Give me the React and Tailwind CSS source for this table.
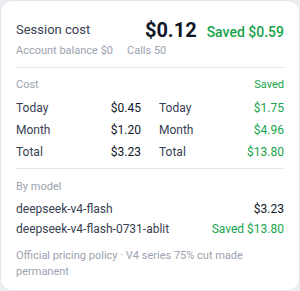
const rows = [
  { label: "Today", cost: "$0.45", saved: "$1.75" },
  { label: "Month", cost: "$1.20", saved: "$4.96" },
  { label: "Total", cost: "$3.23", saved: "$13.80" },
];

export default function App() {
  return (
    <div className="w-[300px] h-[291px] bg-[#eceef1] font-['Roboto',sans-serif]">
      <div className="h-full w-full rounded-[12px] border border-[#e4e6ea] bg-white px-[15px] pt-[16px]">
        <div className="flex h-[26px] items-center justify-between">
          <span className="text-[13px] text-[#374151]">Session cost</span>
          <div className="flex items-baseline gap-[10px]">
            <span className="text-[20px] font-bold text-[#111827]">$0.12</span>
            <span className="text-[14px] font-medium text-[#16a34a]">Saved $0.59</span>
          </div>
        </div>
        <div className="flex h-[16px] items-center gap-[14px] text-[11px] text-[#9ca3af]">
          <span>Account balance $0</span>
          <span>Calls 50</span>
        </div>
        <div className="mt-[8px] border-t border-[#e5e7eb]" />
        <div className="mt-[9px] flex h-[16px] items-center justify-between text-[11px]">
          <span className="text-[#9ca3af]">Cost</span>
          <span className="text-[#16a34a]">Saved</span>
        </div>
        <div className="mt-[4px] grid grid-cols-2 gap-x-[18px] text-[12px]">
          {rows.map((r) => (
            <div key={r.label} className="contents">
              <div className="flex h-[22px] items-center justify-between">
                <span className="text-[#374151]">{r.label}</span>
                <span className="text-[#111827]">{r.cost}</span>
              </div>
              <div className="flex h-[22px] items-center justify-between">
                <span className="text-[#374151]">{r.label}</span>
                <span className="text-[#16a34a]">{r.saved}</span>
              </div>
            </div>
          ))}
        </div>
        <div className="mt-[5px] border-t border-[#e5e7eb]" />
        <div className="mt-[10px] flex h-[16px] items-center text-[11px] text-[#9ca3af]">By model</div>
        <div className="mt-[4px] text-[12px]">
          <div className="flex h-[20px] items-center justify-between">
            <span className="text-[#374151]">deepseek-v4-flash</span>
            <span className="text-[#111827]">$3.23</span>
          </div>
          <div className="flex h-[20px] items-center justify-between">
            <span className="text-[#374151]">deepseek-v4-flash-0731-ablit</span>
            <span className="text-[#16a34a]">Saved $13.80</span>
          </div>
        </div>
        <p className="mt-[9px] text-[11px] leading-[16px] text-[#9ca3af]">
          Official pricing policy · V4 series 75% cut made permanent
        </p>
      </div>
    </div>
  );
}
